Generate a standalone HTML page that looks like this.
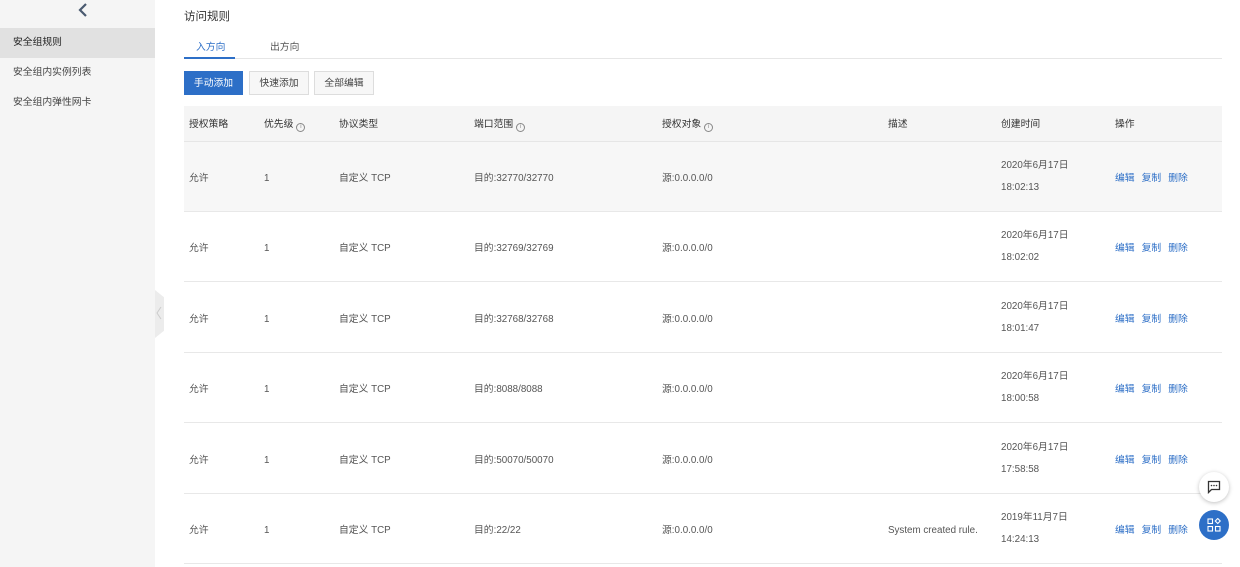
<!DOCTYPE html>
<html><head><meta charset="utf-8"><style>
*{margin:0;padding:0;box-sizing:border-box}
body{width:1240px;height:567px;overflow:hidden;background:#fff;font-family:"Liberation Sans","Noto Sans CJK SC",sans-serif;font-size:9.8px;color:#333;position:relative}
.side{position:absolute;left:0;top:0;width:155px;height:567px;background:#f5f5f5}
.side .it{position:absolute;left:0;width:155px;height:30px;line-height:30px;padding-left:13px;color:#444}
.side .sel{background:#e1e1e1;color:#222}
.tog{position:absolute;left:155px;top:290px;width:9px;height:48px;background:#ececec;clip-path:polygon(0 0,100% 15%,100% 85%,0 100%)}
.a{position:absolute}
.btn{position:absolute;top:71px;height:24px;line-height:24px;border:1px solid #ddd;background:#f7f7f7;text-align:center;color:#444}
.row{position:absolute;left:184px;width:1038px;height:70px;border-bottom:1px solid #e8e8e8}
.c{position:absolute;top:2px;line-height:70px;color:#555}
.lk{color:#2d6fc7}
.lk b{font-weight:normal;margin-right:7px}
.hd{position:absolute;left:184px;top:106px;width:1038px;height:36px;background:#f5f5f5;border-bottom:1px solid #e6e6e6}
.hd span{position:absolute;top:1px;line-height:36px;color:#333}
.i{display:inline-block;width:9px;height:9px;border:1px solid #888;border-radius:50%;font-size:6px;line-height:7px;text-align:center;color:#888;vertical-align:-1px;margin-left:3px;font-style:normal}
</style></head><body>
<div class="side">
<svg class="a" style="left:78px;top:3px" width="10" height="14" viewBox="0 0 10 14"><path d="M8 1L2 7l6 6" fill="none" stroke="#4a5a70" stroke-width="2.2"/></svg>
<div class="it sel" style="top:28px">安全组规则</div>
<div class="it" style="top:58px">安全组内实例列表</div>
<div class="it" style="top:88px">安全组内弹性网卡</div>
</div>
<div class="tog"></div>
<svg class="a" style="left:156px;top:306px" width="6" height="14" viewBox="0 0 6 14"><path d="M5 1L1 7l4 6" fill="none" stroke="#ccc" stroke-width="1"/></svg>
<div class="a" style="left:184px;top:8px;font-size:11.5px;color:#333">访问规则</div>
<div class="a" style="left:196px;top:39px;color:#2d6fc7">入方向</div>
<div class="a" style="left:270px;top:39px;color:#555">出方向</div>
<div class="a" style="left:184px;top:58px;width:1038px;height:1px;background:#e6e6e6"></div>
<div class="a" style="left:184px;top:57px;width:51px;height:2px;background:#2d6fc7"></div>
<div class="btn" style="left:184px;width:59px;background:#2d6fc7;border-color:#2d6fc7;color:#fff">手动添加</div>
<div class="btn" style="left:249px;width:60px">快速添加</div>
<div class="btn" style="left:314px;width:60px">全部编辑</div>
<div class="hd">
<span style="left:5px">授权策略</span><span style="left:80px">优先级<i class="i">i</i></span><span style="left:155px">协议类型</span><span style="left:290px">端口范围<i class="i">i</i></span><span style="left:478px">授权对象<i class="i">i</i></span><span style="left:704px">描述</span><span style="left:817px">创建时间</span><span style="left:931px">操作</span>
</div>
<div id="rows"></div>
<script>
var d=[["32770/32770","2020年6月17日","18:02:13",""],["32769/32769","2020年6月17日","18:02:02",""],["32768/32768","2020年6月17日","18:01:47",""],["8088/8088","2020年6月17日","18:00:58",""],["50070/50070","2020年6月17日","17:58:58",""],["22/22","2019年11月7日","14:24:13","System created rule."]];
var h="";d.forEach(function(r,k){h+='<div class="row" style="top:'+(142+k*70.4)+'px;'+(k==0?'background:#f7f7f7':'')+'"><span class="c" style="left:5px">允许</span><span class="c" style="left:80px">1</span><span class="c" style="left:155px">自定义 TCP</span><span class="c" style="left:290px">目的:'+r[0]+'</span><span class="c" style="left:478px">源:0.0.0.0/0</span><span class="c" style="left:704px">'+r[3]+'</span><span class="c" style="left:817px;line-height:22px;top:13px">'+r[1]+'<br>'+r[2]+'</span><span class="c lk" style="left:931px"><b>编辑</b><b>复制</b><b>删除</b></span></div>'});
document.getElementById("rows").innerHTML=h;
</script>
<div class="a" style="left:1199px;top:472px;width:30px;height:30px;border-radius:50%;background:#fff;box-shadow:0 1px 4px rgba(0,0,0,.25)"><svg style="position:absolute;left:8px;top:8px" width="14" height="14" viewBox="0 0 14 14"><path d="M1.5 1.5h11v8h-8l-3 3z" fill="none" stroke="#333" stroke-width="1.3"/><circle cx="4.5" cy="5.5" r=".8" fill="#333"/><circle cx="7" cy="5.5" r=".8" fill="#333"/><circle cx="9.5" cy="5.5" r=".8" fill="#333"/></svg></div>
<div class="a" style="left:1199px;top:510px;width:30px;height:30px;border-radius:50%;background:#2d6fc7"><svg style="position:absolute;left:8px;top:8px" width="14" height="14" viewBox="0 0 14 14" fill="none" stroke="#fff" stroke-width="1.1"><rect x="1" y="1" width="4.5" height="4.5"/><rect x="1" y="8.5" width="4.5" height="4.5"/><rect x="8.5" y="8.5" width="4.5" height="4.5"/><path d="M10.75 .5l2.5 2.5-2.5 2.5-2.5-2.5z"/></svg></div>
</body></html>
